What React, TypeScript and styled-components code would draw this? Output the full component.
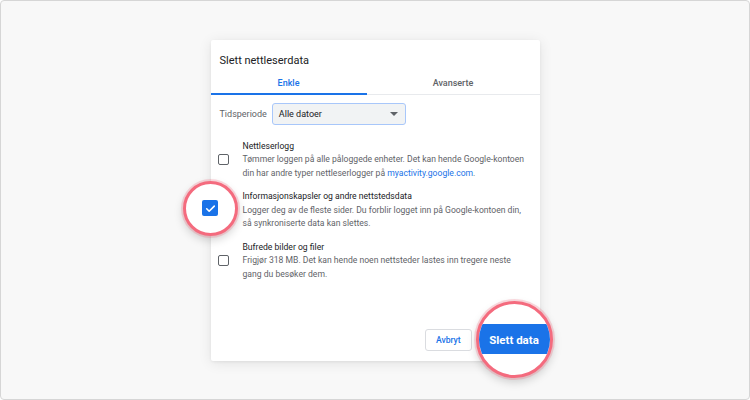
import styled, { createGlobalStyle } from 'styled-components';

const GlobalStyle = createGlobalStyle`
  html, body {
    margin: 0;
    padding: 0;
    background: #ffffff;
    font-family: Roboto, "Liberation Sans", Arial, sans-serif;
  }
  * { box-sizing: border-box; }
`;

const Page = styled.div`
  width: 750px;
  height: 400px;
  background: #f8f8f8;
  border: 1px solid #d6d6d6;
  border-radius: 4px;
  display: flex;
  align-items: center;
  justify-content: center;
`;

const Dialog = styled.div`
  position: relative;
  width: 329px;
  height: 321px;
  background: #ffffff;
  border-radius: 2px;
  box-shadow: 0 2px 14px rgba(0, 0, 0, 0.09), 0 1px 3px rgba(0, 0, 0, 0.06);
  display: flex;
  flex-direction: column;
`;

const Title = styled.div`
  padding: 14px 9px 0;
  font-size: 11px;
  line-height: 14px;
  color: #202124;
`;

const Tabs = styled.div`
  margin-top: 4px;
  display: flex;
  border-bottom: 1px solid #e8eaed;
`;

const Tab = styled.div<{ $active?: boolean; $width?: number }>`
  flex: ${(p) => (p.$width ? `0 0 ${p.$width}px` : '1')};
  height: 23px;
  display: flex;
  align-items: center;
  justify-content: center;
  padding-top: 1px;
  font-size: 9px;
  font-weight: 500;
  color: ${(p) => (p.$active ? '#1a73e8' : '#5f6368')};
  border-bottom: 2px solid ${(p) => (p.$active ? '#1a73e8' : 'transparent')};
  margin-bottom: -1px;
`;

const Body = styled.div`
  flex: 1;
  padding: 8px 9px 0 7px;
  display: flex;
  flex-direction: column;
`;

const TimeRow = styled.div`
  display: flex;
  align-items: center;
  gap: 5px;
  padding-left: 2px;
`;

const Label = styled.span`
  font-size: 9px;
  color: #5f6368;
`;

const Select = styled.div`
  width: 134px;
  height: 22px;
  border: 1px solid #a8c7fa;
  border-radius: 3px;
  background: #f1f3f4;
  display: flex;
  align-items: center;
  justify-content: space-between;
  padding: 0 7px 0 6px;
  font-size: 9px;
  color: #202124;
`;

const Caret = styled.span`
  width: 0;
  height: 0;
  border-left: 4px solid transparent;
  border-right: 4px solid transparent;
  border-top: 4px solid #5f6368;
`;

const ItemList = styled.div`
  margin-top: 15px;
  display: flex;
  flex-direction: column;
  gap: 10px;
`;

const Item = styled.div`
  display: flex;
  align-items: flex-start;
`;

const BoxCell = styled.div`
  width: 25px;
  padding-top: 14px;
  display: flex;
`;

const Box = styled.div<{ $checked?: boolean; $size?: number }>`
  width: ${(p) => p.$size ?? 11}px;
  height: ${(p) => p.$size ?? 11}px;
  border-radius: 2px;
  border: ${(p) => (p.$checked ? 'none' : '1.5px solid #5f6368')};
  background: ${(p) => (p.$checked ? '#1a73e8' : '#fff')};
  display: flex;
  align-items: center;
  justify-content: center;
`;

const ItemText = styled.div`
  flex: 1;
  font-size: 8.6px;
  line-height: 13.5px;
`;

const ItemTitle = styled.div`
  color: #202124;
`;

const ItemDesc = styled.div`
  color: #5f6368;
`;

const Link = styled.span`
  color: #1a73e8;
`;

const Footer = styled.div`
  display: flex;
  justify-content: flex-end;
  gap: 8px;
  padding: 0 11px 10px;
`;

const Button = styled.div<{ $primary?: boolean }>`
  height: 22px;
  padding: 0 ${(p) => (p.$primary ? 5 : 10)}px;
  border-radius: 3px;
  display: flex;
  align-items: center;
  font-size: 8.6px;
  font-weight: 500;
  color: ${(p) => (p.$primary ? '#fff' : '#1a73e8')};
  background: ${(p) => (p.$primary ? '#1a73e8' : '#fff')};
  border: 1px solid ${(p) => (p.$primary ? '#1a73e8' : '#dadce0')};
`;

const Magnifier = styled.div<{ $x: number; $y: number; $d: number }>`
  position: absolute;
  left: ${(p) => p.$x}px;
  top: ${(p) => p.$y}px;
  width: ${(p) => p.$d}px;
  height: ${(p) => p.$d}px;
  border-radius: 50%;
  background: #fff;
  border: 3px solid #f46b7e;
  box-shadow: 0 0 0 2px rgba(244, 107, 126, 0.25), 0 4px 10px rgba(0, 0, 0, 0.18);
  overflow: hidden;
  display: flex;
  align-items: center;
  justify-content: center;
  z-index: 2;
`;

const BigButton = styled.div`
  width: 100%;
  height: 30px;
  background: #1a73e8;
  color: #fff;
  font-size: 11.5px;
  font-weight: 700;
  display: flex;
  align-items: center;
  justify-content: center;
  padding-top: 1px;
`;

const Check = ({ size }: { size: number }) => (
  <svg width={size} height={size} viewBox="0 0 24 24">
    <path d="M5 12.5l4.5 4.5L19 7.5" fill="none" stroke="#fff" strokeWidth="3" strokeLinecap="round" strokeLinejoin="round" />
  </svg>
);

const items = [
  {
    title: 'Nettleserlogg',
    desc: (
      <>
        Tømmer loggen på alle påloggede enheter. Det kan hende Google-kontoen din har andre typer
        nettleserlogger på <Link>myactivity.google.com</Link>.
      </>
    ),
    checked: false,
  },
  {
    title: 'Informasjonskapsler og andre nettstedsdata',
    desc: 'Logger deg av de fleste sider. Du forblir logget inn på Google-kontoen din, så synkroniserte data kan slettes.',
    checked: true,
  },
  {
    title: 'Bufrede bilder og filer',
    desc: 'Frigjør 318 MB. Det kan hende noen nettsteder lastes inn tregere neste gang du besøker dem.',
    checked: false,
  },
];

export default function App() {
  return (
    <>
      <GlobalStyle />
      <Page>
        <Dialog>
          <Title>Slett nettleserdata</Title>
          <Tabs>
            <Tab $active $width={156}>Enkle</Tab>
            <Tab>Avanserte</Tab>
          </Tabs>
          <Body>
            <TimeRow>
              <Label>Tidsperiode</Label>
              <Select>
                Alle datoer
                <Caret />
              </Select>
            </TimeRow>
            <ItemList>
              {items.map((it) => (
                <Item key={it.title}>
                  <BoxCell>
                    <Box $checked={it.checked}>{it.checked && <Check size={9} />}</Box>
                  </BoxCell>
                  <ItemText>
                    <ItemTitle>{it.title}</ItemTitle>
                    <ItemDesc>{it.desc}</ItemDesc>
                  </ItemText>
                </Item>
              ))}
            </ItemList>
          </Body>
          <Footer>
            <Button>Avbryt</Button>
            <Button $primary>Slett data</Button>
          </Footer>
          <Magnifier $x={-28} $y={141} $d={55}>
            <Box $checked $size={16}>
              <Check size={13} />
            </Box>
          </Magnifier>
          <Magnifier $x={265} $y={261} $d={77}>
            <BigButton>Slett data</BigButton>
          </Magnifier>
        </Dialog>
      </Page>
    </>
  );
}
